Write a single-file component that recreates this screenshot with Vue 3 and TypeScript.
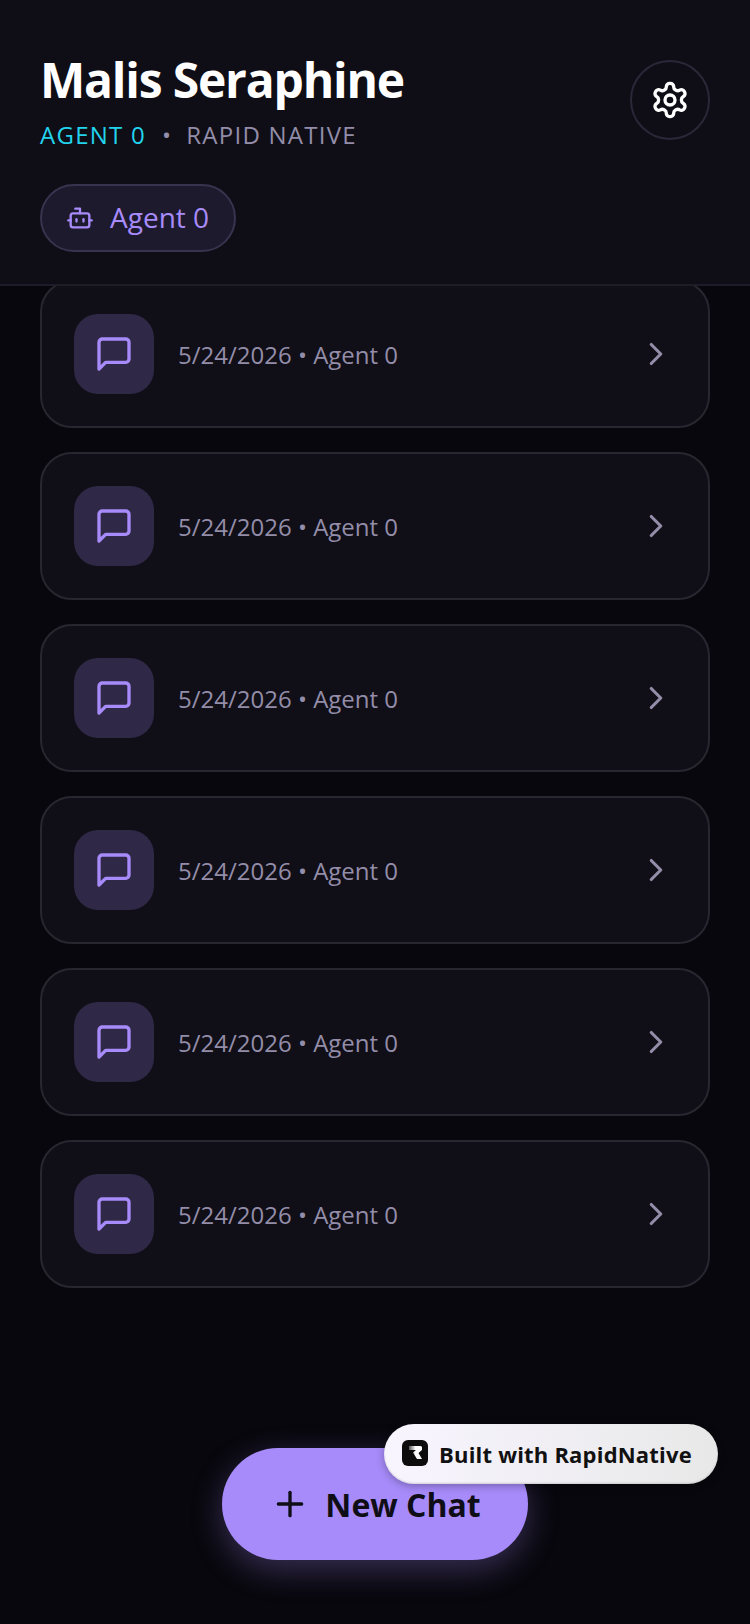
<template>
  <div class="screen">
    <header class="top">
      <div class="top-row">
        <div class="titles">
          <h1 class="name">Malis Seraphine</h1>
          <div class="sub">
            <span class="sub-agent">AGENT 0</span>
            <span class="sub-dot">•</span>
            <span class="sub-app">RAPID NATIVE</span>
          </div>
        </div>
        <button class="gear">
          <svg viewBox="0 0 24 24" width="40" height="40" fill="none" stroke="#fff" stroke-width="2" stroke-linecap="round" stroke-linejoin="round">
            <path d="M12.22 2h-.44a2 2 0 0 0-2 2v.18a2 2 0 0 1-1 1.73l-.43.25a2 2 0 0 1-2 0l-.15-.08a2 2 0 0 0-2.73.73l-.22.38a2 2 0 0 0 .73 2.73l.15.1a2 2 0 0 1 1 1.72v.51a2 2 0 0 1-1 1.74l-.15.09a2 2 0 0 0-.73 2.73l.22.38a2 2 0 0 0 2.73.73l.15-.08a2 2 0 0 1 2 0l.43.25a2 2 0 0 1 1 1.73V20a2 2 0 0 0 2 2h.44a2 2 0 0 0 2-2v-.18a2 2 0 0 1 1-1.73l.43-.25a2 2 0 0 1 2 0l.15.08a2 2 0 0 0 2.73-.73l.22-.39a2 2 0 0 0-.73-2.73l-.15-.08a2 2 0 0 1-1-1.74v-.5a2 2 0 0 1 1-1.74l.15-.09a2 2 0 0 0 .73-2.73l-.22-.38a2 2 0 0 0-2.73-.73l-.15.08a2 2 0 0 1-2 0l-.43-.25a2 2 0 0 1-1-1.73V4a2 2 0 0 0-2-2z" />
            <circle cx="12" cy="12" r="3" />
          </svg>
        </button>
      </div>
      <div class="chip">
        <svg viewBox="0 0 24 24" width="28" height="28" fill="none" stroke="#a78bfa" stroke-width="2" stroke-linecap="round" stroke-linejoin="round">
          <path d="M12 8V4H8" />
          <rect x="4" y="8" width="16" height="12" rx="2" />
          <path d="M2 14h2" />
          <path d="M20 14h2" />
          <path d="M15 13v2" />
          <path d="M9 13v2" />
        </svg>
        <span class="chip-label">Agent 0</span>
      </div>
    </header>

    <main class="list">
      <div v-for="c in chats" :key="c.id" class="card">
        <div class="card-icon">
          <svg viewBox="0 0 24 24" width="40" height="40" fill="none" stroke="#a78bfa" stroke-width="2" stroke-linecap="round" stroke-linejoin="round">
            <path d="M21 15a2 2 0 0 1-2 2H7l-4 4V5a2 2 0 0 1 2-2h14a2 2 0 0 1 2 2z" />
          </svg>
        </div>
        <span class="card-text">{{ c.date }} • {{ c.agent }}</span>
        <svg class="chev" viewBox="0 0 24 24" width="38" height="38" fill="none" stroke="#938da9" stroke-width="2" stroke-linecap="round" stroke-linejoin="round">
          <path d="m9 18 6-6-6-6" />
        </svg>
      </div>
    </main>

    <button class="fab">
      <svg class="fab-plus" viewBox="0 0 24 24" width="40" height="40" fill="none" stroke="#0f0e17" stroke-width="2" stroke-linecap="round" stroke-linejoin="round">
        <path d="M5 12h14" />
        <path d="M12 5v14" />
      </svg>
      <span>New Chat</span>
    </button>

    <div class="badge">
      <svg class="badge-logo" viewBox="0 0 26 26" width="26" height="26">
        <defs>
          <linearGradient id="logoFade" x1="0" y1="0" x2="1" y2="0">
            <stop offset="0" stop-color="#555" />
            <stop offset="0.5" stop-color="#fff" />
          </linearGradient>
        </defs>
        <rect width="26" height="26" rx="6" fill="#0c0c0c" />
        <path d="M7 6h11.500a1.500 1.500 0 0 1 1.500 1.500v2.500l-3.500 3 3.500 6h-5l-4-6.500 3-2.500H7z" fill="url(#logoFade)" />
      </svg>
      <span>Built with RapidNative</span>
    </div>
  </div>
</template>

<script setup lang="ts">
const chats = [1, 2, 3, 4, 5, 6].map((id) => ({
  id,
  date: "5/24/2026",
  agent: "Agent 0",
}));
</script>

<style>
html,
body {
  margin: 0;
  background: #08070d;
}
</style>

<style scoped>
.screen {
  position: relative;
  width: 750px;
  height: 1624px;
  overflow: hidden;
  background: #08070d;
  font-family: "Open Sans", sans-serif;
}

.top {
  position: relative;
  z-index: 2;
  box-sizing: border-box;
  height: 286px;
  padding: 48px 40px 0;
  background: #0f0e16;
  border-bottom: 2px solid #1e1c29;
}

.top-row {
  display: flex;
  justify-content: space-between;
  align-items: flex-start;
}

.name {
  margin: 0;
  font-size: 48px;
  line-height: 64px;
  font-weight: 700;
  letter-spacing: -1.2px;
  color: #fff;
}

.sub {
  display: flex;
  align-items: center;
  margin-top: 7px;
  font-size: 24px;
  line-height: 32px;
  letter-spacing: 1.25px;
}

.sub-agent {
  color: #22d3ee;
}

.sub-dot {
  margin: 0 14px 0 16px;
  color: #938da9;
}

.sub-app {
  color: #938da9;
}

.gear {
  display: flex;
  align-items: center;
  justify-content: center;
  box-sizing: border-box;
  width: 80px;
  height: 80px;
  margin-top: 12px;
  padding: 0;
  border-radius: 50%;
  border: 2px solid #2a2838;
  background: transparent;
}

.chip {
  display: inline-flex;
  align-items: center;
  gap: 16px;
  box-sizing: border-box;
  height: 68px;
  margin-top: 33px;
  padding: 0 25px 0 24px;
  border-radius: 34px;
  border: 2px solid #38334e;
  background: #1e1a2d;
  font-size: 28px;
  color: #a78bfa;
}

.chip-label {
  padding-bottom: 2px;
}

.list {
  display: flex;
  flex-direction: column;
  gap: 24px;
  margin-top: -6px;
  padding: 0 40px;
}

.card {
  display: flex;
  align-items: center;
  box-sizing: border-box;
  height: 148px;
  padding: 0 32px;
  border-radius: 32px;
  border: 2px solid #282730;
  background: #100e16;
}

.card-icon {
  display: flex;
  align-items: center;
  justify-content: center;
  width: 80px;
  height: 80px;
  border-radius: 24px;
  background: #2f2846;
}

.card-text {
  flex: 1;
  margin-left: 24px;
  font-size: 24px;
  color: #938da9;
}

.chev {
  margin-right: 1px;
}

.fab {
  position: absolute;
  left: 222px;
  top: 1448px;
  display: flex;
  align-items: center;
  justify-content: center;
  gap: 16px;
  width: 306px;
  height: 112px;
  padding: 0;
  border: 0;
  border-radius: 56px;
  background: #a78bfa;
  box-shadow: 0 10px 32px rgba(167, 139, 250, 0.3);
  font-family: inherit;
  font-size: 32px;
  font-weight: 700;
  color: #0f0e17;
}

.fab-plus {
  margin-left: 1px;
  margin-right: -1px;
}

.badge {
  position: absolute;
  left: 384px;
  top: 1424px;
  display: flex;
  align-items: center;
  gap: 11px;
  box-sizing: border-box;
  width: 334px;
  height: 60px;
  padding: 0 18px;
  border-radius: 30px;
  background: linear-gradient(90deg, #f8f5ff, #e8e8e8);
  box-shadow: 0 2px 8px rgba(0, 0, 0, 0.3), inset 0 -1px 2px rgba(0, 0, 0, 0.15);
  font-size: 22px;
  font-weight: 700;
  letter-spacing: 0.2px;
  color: #111;
}

.badge-logo {
  margin-top: -3px;
}
</style>
